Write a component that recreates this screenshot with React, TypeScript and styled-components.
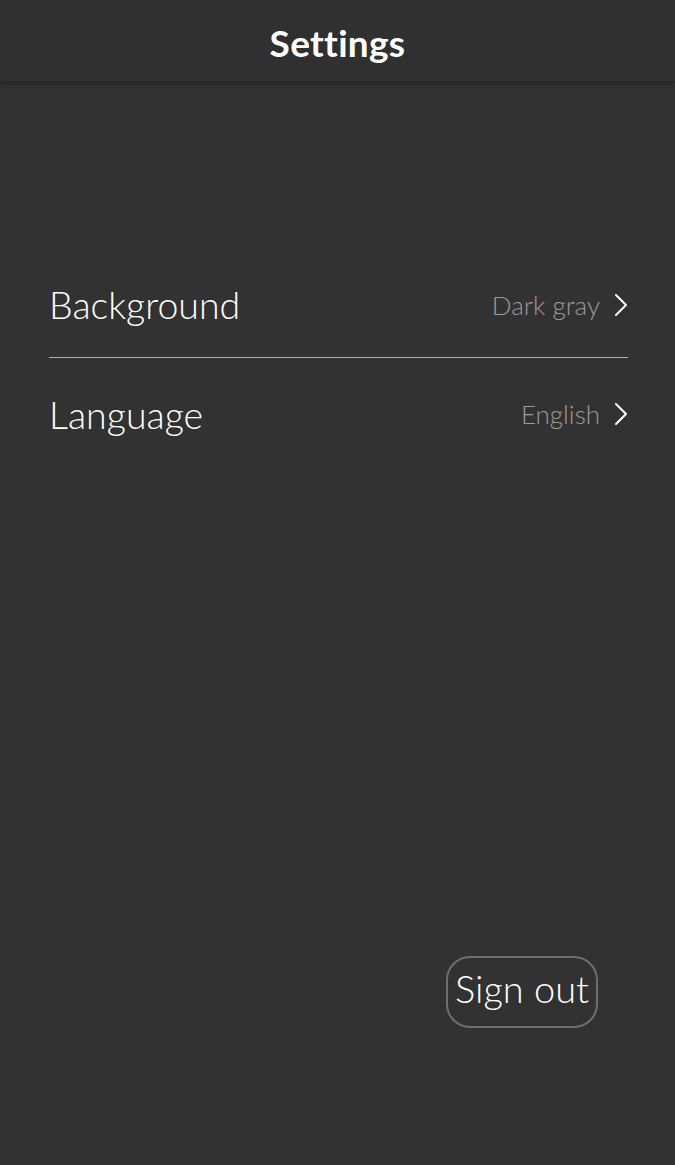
import React from "react";
import styled, { createGlobalStyle } from "styled-components";

const Global = createGlobalStyle`
  html, body { margin: 0; padding: 0; background: #323232; }
  body { font-family: Lato, "Open Sans", sans-serif; }
`;

const Page = styled.div`
  width: 675px;
  height: 1165px;
  background: #323232;
  display: flex;
  flex-direction: column;
  overflow: hidden;
`;

const Header = styled.header`
  height: 81px;
  background: #303030;
  display: flex;
  align-items: center;
  justify-content: center;
  box-shadow: 0 2px 6px rgba(0, 0, 0, 0.35);
  position: relative;
  z-index: 1;
`;

const Title = styled.h1`
  margin: 4px 0 0;
  color: #ffffff;
  font-family: Lato, sans-serif;
  font-weight: 700;
  font-size: 37px;
  letter-spacing: 0.3px;
`;

const List = styled.div`
  margin-top: 173px;
  padding: 0 47px 0 49px;
  display: flex;
  flex-direction: column;
`;

const Row = styled.div<{ $divider?: boolean; $h: number }>`
  height: ${(p) => p.$h}px;
  box-sizing: border-box;
  padding-bottom: ${(p) => (p.$divider ? 2 : 0)}px;
  display: flex;
  align-items: center;
  justify-content: space-between;
  border-bottom: ${(p) => (p.$divider ? "1px solid #8fd14f" : "none")};
`;

const Label = styled.span`
  color: #ffffff;
  font-family: Lato, sans-serif;
  font-weight: 300;
  font-size: 37.5px;
`;

const Value = styled.span`
  display: flex;
  align-items: center;
  gap: 14px;
  color: #9a9a9a;
  font-family: Lato, sans-serif;
  font-weight: 300;
  font-size: 26px;
`;

const Footer = styled.div`
  flex: 1;
  display: flex;
  align-items: flex-end;
  justify-content: flex-end;
  padding: 0 77px 137px 0;
`;

const SignOut = styled.button`
  width: 152px;
  height: 72px;
  border: 2px solid #6e6e6e;
  border-radius: 24px;
  background: transparent;
  color: #ffffff;
  font-family: Lato, sans-serif;
  font-weight: 300;
  font-size: 38px;
  padding: 0 0 8px;
  cursor: pointer;
`;

const Chevron = () => (
  <svg width="14" height="24" viewBox="0 0 14 24" fill="none">
    <path d="M2 2 L12 12 L2 22" stroke="#ffffff" strokeWidth="2" strokeLinecap="round" strokeLinejoin="round" />
  </svg>
);

export default function App() {
  return (
    <Page>
      <Global />
      <Header>
        <Title>Settings</Title>
      </Header>
      <List>
        <Row $divider $h={104}>
          <Label>Background</Label>
          <Value>
            Dark gray
            <Chevron />
          </Value>
        </Row>
        <Row $h={112}>
          <Label>Language</Label>
          <Value>
            English
            <Chevron />
          </Value>
        </Row>
      </List>
      <Footer>
        <SignOut>Sign out</SignOut>
      </Footer>
    </Page>
  );
}
